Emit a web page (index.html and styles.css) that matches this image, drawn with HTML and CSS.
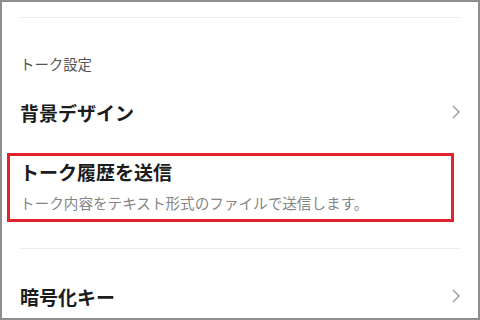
FILE: index.html
```html
<!DOCTYPE html>
<html>
  <head>
    <title>トーク設定</title>
    <link rel="stylesheet" href="styles.css">
  </head>
  <body>
    <div class="frame">
      <div class="divider"></div>

      <div class="section-title">トーク設定</div>

      <div class="row">
        <span class="row-label">背景デザイン</span>
        <svg class="chevron" width="8" height="14" viewBox="0 0 8 14">
          <path d="M1 1 L7 7 L1 13" fill="none" stroke="#9a9a9a" stroke-width="1.4" />
        </svg>
      </div>

      <!-- highlighted item -->
      <div class="highlight">
        <div class="item-title">トーク履歴を送信</div>
        <div class="item-desc">トーク内容をテキスト形式のファイルで送信します。</div>
      </div>

      <div class="divider divider-lower"></div>

      <div class="row row-last">
        <span class="row-label">暗号化キー</span>
        <svg class="chevron" width="8" height="14" viewBox="0 0 8 14">
          <path d="M1 1 L7 7 L1 13" fill="none" stroke="#9a9a9a" stroke-width="1.4" />
        </svg>
      </div>
    </div>
  </body>
</html>
```

FILE: styles.css
```css
/* Page */
body {
  margin: 0;
  font-family: "Noto Sans CJK JP", "Noto Sans", sans-serif;
  background-color: #ffffff;
}

/* Screenshot frame */
.frame {
  width: 480px;
  height: 320px;
  box-sizing: border-box;
  border: 2px solid #8e8e8e;
  background-color: #ffffff;
  overflow: hidden;
}

/* Thin separators */
.divider {
  height: 1px;
  margin: 15px 18px 0 18px;
  background-color: #ececec;
}

.divider-lower {
  margin-top: 26px;
}

/* Section header */
.section-title {
  margin-top: 36px;
  padding-left: 18px;
  font-size: 14.4px;
  line-height: 20px;
  color: #555555;
}

/* Setting rows */
.row {
  display: flex;
  align-items: center;
  justify-content: space-between;
  height: 44px;
  margin-top: 16px;
  padding: 0 18px 0 18px;
}

.row-last {
  margin-top: 25px;
}

.row-label {
  font-size: 19px;
  font-weight: bold;
  color: #1c1c1c;
}

.chevron {
  display: block;
}

/* Red highlight box */
.highlight {
  width: 447px;
  margin-top: 19px;
  margin-left: 5px;
  box-sizing: border-box;
  border: 3px solid #e4222f;
  padding: 4px 10px 6px 10px;
}

.item-title {
  font-size: 19px;
  font-weight: bold;
  line-height: 24px;
  color: #1c1c1c;
}

.item-desc {
  margin-top: 9px;
  font-size: 14.6px;
  line-height: 20px;
  color: #858585;
}
```
